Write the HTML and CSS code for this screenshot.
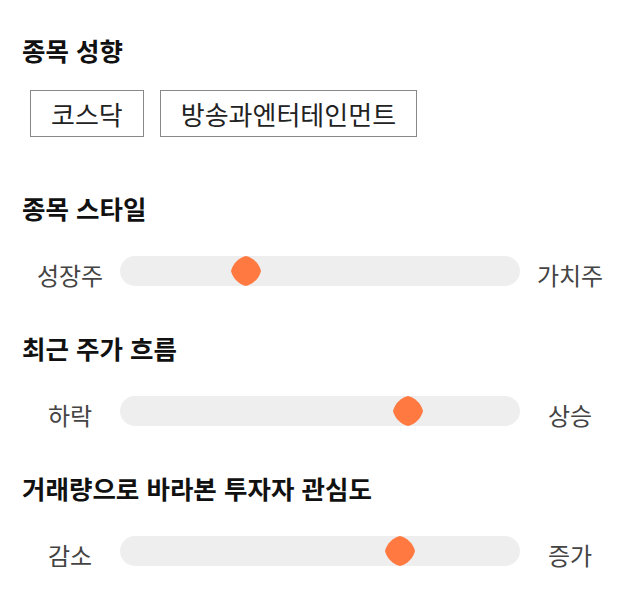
FILE: index.html
```html
<!DOCTYPE html>
<html lang="ko">
<head>
    <meta charset="UTF-8">
    <meta name="viewport" content="width=device-width, initial-scale=1.0">
    <title>종목 성향</title>
    <link rel="stylesheet" href="styles.css">
</head>
<body>
    <div class="page">
        <div class="section section-tags">
            <h2>종목 성향</h2>
            <div class="tags">
                <span class="tag">코스닥</span>
                <span class="tag">방송과엔터테인먼트</span>
            </div>
        </div>

        <div class="section">
            <h2>종목 스타일</h2>
            <div class="slider">
                <span class="label">성장주</span>
                <div class="track">
                    <svg class="thumb" style="left: 31.6%" viewBox="0 0 30 30" width="30" height="30"><path d="M15 0 C22 1.5 28.5 8 30 15 C28.5 22 22 28.5 15 30 C8 28.5 1.5 22 0 15 C1.5 8 8 1.5 15 0 Z"/></svg>
                </div>
                <span class="label">가치주</span>
            </div>
        </div>

        <div class="section">
            <h2>최근 주가 흐름</h2>
            <div class="slider">
                <span class="label">하락</span>
                <div class="track">
                    <svg class="thumb" style="left: 72%" viewBox="0 0 30 30" width="30" height="30"><path d="M15 0 C22 1.5 28.5 8 30 15 C28.5 22 22 28.5 15 30 C8 28.5 1.5 22 0 15 C1.5 8 8 1.5 15 0 Z"/></svg>
                </div>
                <span class="label">상승</span>
            </div>
        </div>

        <div class="section">
            <h2>거래량으로 바라본 투자자 관심도</h2>
            <div class="slider">
                <span class="label">감소</span>
                <div class="track">
                    <svg class="thumb" style="left: 70%" viewBox="0 0 30 30" width="30" height="30"><path d="M15 0 C22 1.5 28.5 8 30 15 C28.5 22 22 28.5 15 30 C8 28.5 1.5 22 0 15 C1.5 8 8 1.5 15 0 Z"/></svg>
                </div>
                <span class="label">증가</span>
            </div>
        </div>
    </div>
</body>
</html>
```

FILE: styles.css
```css
body {
    margin: 0;
    padding: 0;
    background-color: #fff;
    font-family: "Noto Sans CJK KR", "Noto Sans", sans-serif;
    color: #111;
}
.page {
    padding: 34px 20px 0;
}
.section {
    margin-bottom: 42px;
}
.section-tags {
    margin-bottom: 55px;
}
.section h2 {
    margin: 0;
    padding-left: 2px;
    font-size: 25.5px;
    font-weight: bold;
    line-height: 32px;
    color: #111;
}
.tags {
    display: flex;
    gap: 16px;
    margin-top: 24px;
    padding-left: 10px;
}
.tag {
    border: 1px solid #888;
    padding: 5px 20px;
    font-size: 26px;
    line-height: 35px;
    color: #222;
}
.slider {
    display: flex;
    align-items: center;
    margin-top: 28px;
}
.label {
    width: 100px;
    padding-top: 8px;
    text-align: center;
    font-size: 24px;
    line-height: 30px;
    color: #444;
}
.track {
    position: relative;
    flex: 1;
    height: 30px;
    border-radius: 15px;
    background-color: #eeeeee;
}
.thumb {
    position: absolute;
    top: 0;
    transform: translateX(-50%);
    fill: #ff7940;
}
```
